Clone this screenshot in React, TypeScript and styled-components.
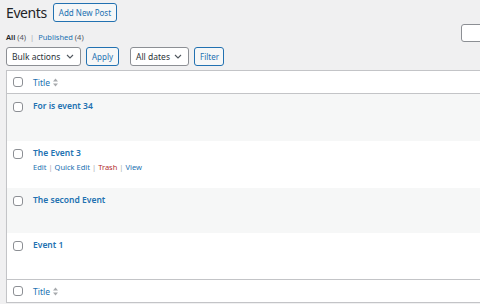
import { type ReactElement } from "react";
import styled, { createGlobalStyle } from "styled-components";

const GlobalStyle = createGlobalStyle`
  html, body {
    margin: 0;
    padding: 0;
    background: #f0f0f1;
    overflow: hidden;
  }
  body {
    font-family: "Noto Sans", "Open Sans", sans-serif;
    color: #3c434a;
  }
`;

const Page = styled.div`
  width: 560px;
  padding: 3px 0 0 6px;
`;

const TitleRow = styled.div`
  display: flex;
  align-items: center;
  gap: 6px;
  height: 19px;
`;

const Heading = styled.h1`
  margin: 0;
  font-size: 14px;
  font-weight: 400;
  letter-spacing: -0.4px;
  line-height: 19px;
  color: #1d2327;
`;

const OutlineButton = styled.button<{ $w?: number }>`
  height: 19px;
  ${(p) => (p.$w ? `width: ${p.$w}px;` : "")}
  padding: 0 5px;
  border: 1px solid #2271b1;
  border-radius: 3px;
  background: #f6f7f7;
  color: #2271b1;
  font-family: inherit;
  font-size: 8px;
  line-height: 17px;
`;

const SubRow = styled.div`
  display: flex;
  justify-content: space-between;
  align-items: flex-end;
  margin-top: 2px;
  height: 18px;
`;

const Views = styled.div`
  font-size: 7.5px;
  line-height: 10px;
  color: #50575e;
`;

const Current = styled.span`
  color: #1d2327;
  font-weight: 600;
`;

const ViewLink = styled.span`
  color: #2271b1;
`;

const Sep = styled.span`
  color: #a7aaad;
  margin: 0 4px;
`;

const SearchInput = styled.div`
  width: 105px;
  height: 18px;
  box-sizing: border-box;
  border: 1px solid #8c8f94;
  border-radius: 3px;
  background: #fff;
`;

const Nav = styled.div`
  display: flex;
  align-items: center;
  margin-top: 5px;
  height: 19px;
`;

const Group = styled.div`
  display: flex;
  gap: 5px;
  margin-right: 11px;
`;

const Select = styled.div<{ $w: number }>`
  display: flex;
  align-items: center;
  justify-content: space-between;
  box-sizing: border-box;
  width: ${(p) => p.$w}px;
  height: 19px;
  padding: 0 6px 0 5px;
  border: 1px solid #8c8f94;
  border-radius: 3px;
  background: #fff;
  color: #2c3338;
  font-size: 8.5px;
`;

const Table = styled.div`
  margin-top: 4px;
  border: 1px solid #c3c4c7;
  box-shadow: 0 1px 1px rgba(0, 0, 0, 0.04);
  background: #fff;
`;

const HeadRow = styled.div<{ $foot?: boolean }>`
  display: flex;
  align-items: center;
  height: 22px;
  padding-left: 6px;
  background: #fff;
  border-${(p) => (p.$foot ? "top" : "bottom")}: 1px solid #c3c4c7;
`;

const Row = styled.div<{ $odd: boolean; $h: number }>`
  display: flex;
  align-items: flex-start;
  height: ${(p) => p.$h}px;
  padding: 6px 0 0 6px;
  box-sizing: border-box;
  background: ${(p) => (p.$odd ? "#f6f7f7" : "#fff")};
`;

const Check = styled.span`
  flex: none;
  width: 10px;
  height: 10px;
  box-sizing: border-box;
  border: 1px solid #8c8f94;
  border-radius: 3px;
  background: #fff;
`;

const RowCheck = styled(Check)`
  margin-top: 2px;
`;

const Cell = styled.div`
  margin-left: 10px;
`;

const HeadTitle = styled.span`
  display: flex;
  align-items: center;
  gap: 3px;
  margin-left: 10px;
  font-size: 8.5px;
  color: #2271b1;
`;

const PostTitle = styled.div`
  font-size: 8.5px;
  font-weight: 600;
  line-height: 11px;
  color: #2271b1;
`;

const Actions = styled.div`
  margin-top: 4px;
  font-size: 7.5px;
  line-height: 10px;
  color: #2271b1;
`;

const Trash = styled.span`
  color: #b32d2e;
`;

const Bar = styled.span`
  color: #a7aaad;
  margin: 0 2px;
`;

function Chevron(): ReactElement {
  return (
    <svg width="8" height="5" viewBox="0 0 8 5">
      <path d="M1 1l3 3 3-3" fill="none" stroke="#50575e" strokeWidth="1.1" />
    </svg>
  );
}

function SortIcon(): ReactElement {
  return (
    <svg width="5" height="9" viewBox="0 0 5 9">
      <path d="M2.5 0.5L5 3.5H0z" fill="#a7aaad" />
      <path d="M2.5 8.5L5 5.5H0z" fill="#a7aaad" />
    </svg>
  );
}

const posts = [
  { title: "For is event 34", h: 47 },
  { title: "The Event 3", h: 47, actions: true },
  { title: "The second Event", h: 45 },
  { title: "Event 1", h: 46 },
];

export default function App(): ReactElement {
  return (
    <Page>
      <GlobalStyle />
      <TitleRow>
        <Heading>Events</Heading>
        <OutlineButton>Add New Post</OutlineButton>
      </TitleRow>
      <SubRow>
        <Views>
          <Current>All</Current> (4)
          <Sep>|</Sep>
          <ViewLink>Published</ViewLink> (4)
        </Views>
        <SearchInput />
      </SubRow>
      <Nav>
        <Group>
          <Select $w={75}>
            Bulk actions <Chevron />
          </Select>
          <OutlineButton $w={33}>Apply</OutlineButton>
        </Group>
        <Group>
          <Select $w={59}>
            All dates <Chevron />
          </Select>
          <OutlineButton $w={30}>Filter</OutlineButton>
        </Group>
      </Nav>
      <Table>
        <HeadRow>
          <Check />
          <HeadTitle>
            Title <SortIcon />
          </HeadTitle>
        </HeadRow>
        {posts.map((p, i) => (
          <Row key={p.title} $odd={i % 2 === 0} $h={p.h}>
            <RowCheck />
            <Cell>
              <PostTitle>{p.title}</PostTitle>
              {p.actions && (
                <Actions>
                  Edit<Bar>|</Bar>Quick Edit<Bar>|</Bar>
                  <Trash>Trash</Trash>
                  <Bar>|</Bar>View
                </Actions>
              )}
            </Cell>
          </Row>
        ))}
        <HeadRow $foot>
          <Check />
          <HeadTitle>
            Title <SortIcon />
          </HeadTitle>
        </HeadRow>
      </Table>
    </Page>
  );
}
